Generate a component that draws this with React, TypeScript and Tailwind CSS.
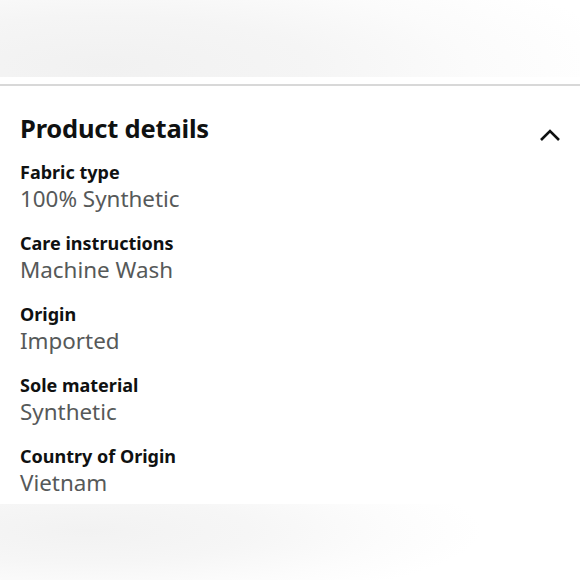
import React from "react";

const items = [
  ["Fabric type", "100% Synthetic"],
  ["Care instructions", "Machine Wash"],
  ["Origin", "Imported"],
  ["Sole material", "Synthetic"],
  ["Country of Origin", "Vietnam"],
];

export default function App() {
  return (
    <div className="w-[580px] h-[580px] bg-white overflow-hidden flex flex-col" style={{ fontFamily: '"Noto Sans", "Open Sans", sans-serif' }}>
      <div className="h-[77px] bg-[radial-gradient(ellipse_90%_160%_at_18%_85%,#f1f1f1_0%,#f5f5f5_40%,#fbfbfb_70%,#ffffff_100%)]" />
      <div className="h-[7px] bg-white" />
      <div className="h-[2px] bg-[#d8d8d8]" />
      <div className="px-5 pt-[24px]">
        <div className="flex items-center justify-between">
          <h2 className="text-[25.5px] leading-[36px] font-bold text-[#0f1111] tracking-[-0.2px]">Product details</h2>
          <svg width="22" height="14" viewBox="0 0 22 14" className="mr-[-1px] mt-[14px]">
            <path d="M2 12 L11 3 L20 12" fill="none" stroke="#0f1111" strokeWidth="2.6" />
          </svg>
        </div>
        <div className="mt-[12px] flex flex-col gap-[15px]">
          {items.map(([k, v]) => (
            <div key={k} className="flex flex-col">
              <span className="text-[18px] leading-[28px] font-bold text-[#0f1111]">{k}</span>
              <span className="text-[22.4px] leading-[28px] text-[#565959] mt-[-1px] mb-[1px]">{v}</span>
            </div>
          ))}
        </div>
      </div>
      <div className="flex-1 mt-[6px] bg-[radial-gradient(ellipse_80%_120%_at_15%_35%,#f2f2f2_0%,#f6f6f6_35%,#fcfcfc_65%,#ffffff_85%)]" />
    </div>
  );
}
